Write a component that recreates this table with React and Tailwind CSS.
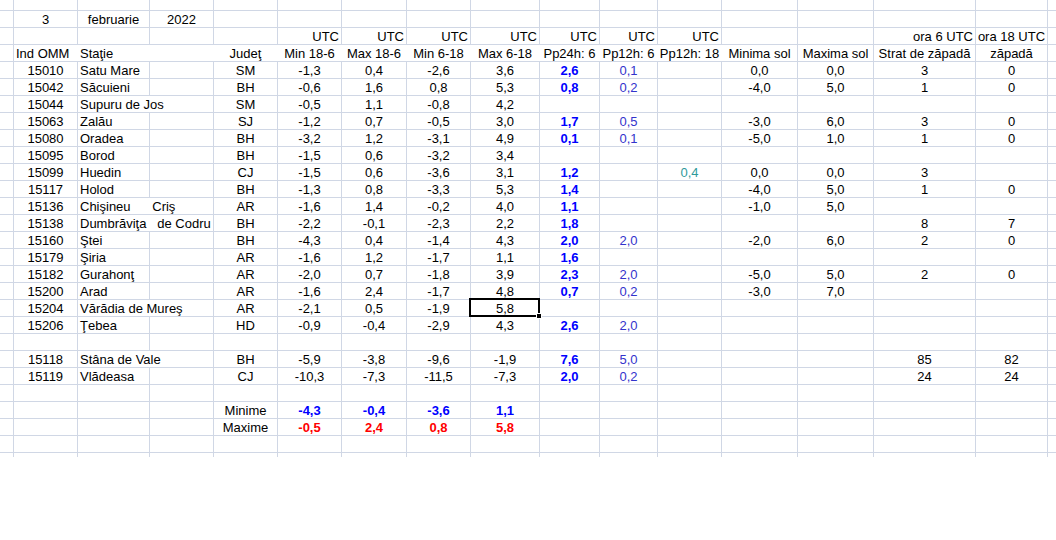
import React from 'react'

// column widths incl. right grid line
const WIDTHS = 'grid-cols-[14px_64px_72px_64px_64px_64px_65px_64px_69px_60px_58px_64px_76px_76px_102px_72px_1fr]'

const K = {
  b: 'font-bold text-[#0000ff]',
  p: 'text-[#3333cc]',
  t: 'text-[#2f9a9a]',
  r: 'font-bold text-[#ff0000]',
}

// data columns: 1 Ind, 2 Statie, 4 Judet, 5..8 temps, 9 Pp24, 10 Pp12/6, 11 Pp12/18, 12 min sol, 13 max sol, 14 strat, 15 zapada
const DATA = [
  ['15010', 'Satu Mare', 'SM', '-1,3', '0,4', '-2,6', '3,6', '2,6', '0,1', '', '0,0', '0,0', '3', '0'],
  ['15042', 'Săcuieni', 'BH', '-0,6', '1,6', '0,8', '5,3', '0,8', '0,2', '', '-4,0', '5,0', '1', '0'],
  ['15044', 'Supuru de Jos', 'SM', '-0,5', '1,1', '-0,8', '4,2', '', '', '', '', '', '', ''],
  ['15063', 'Zalău', 'SJ', '-1,2', '0,7', '-0,5', '3,0', '1,7', '0,5', '', '-3,0', '6,0', '3', '0'],
  ['15080', 'Oradea', 'BH', '-3,2', '1,2', '-3,1', '4,9', '0,1', '0,1', '', '-5,0', '1,0', '1', '0'],
  ['15095', 'Borod', 'BH', '-1,5', '0,6', '-3,2', '3,4', '', '', '', '', '', '', ''],
  ['15099', 'Huedin', 'CJ', '-1,5', '0,6', '-3,6', '3,1', '1,2', '', '0,4', '0,0', '0,0', '3', ''],
  ['15117', 'Holod', 'BH', '-1,3', '0,8', '-3,3', '5,3', '1,4', '', '', '-4,0', '5,0', '1', '0'],
  ['15136', 'Chişineu      Criş', 'AR', '-1,6', '1,4', '-0,2', '4,0', '1,1', '', '', '-1,0', '5,0', '', ''],
  ['15138', 'Dumbrăviţa   de Codru', 'BH', '-2,2', '-0,1', '-2,3', '2,2', '1,8', '', '', '', '', '8', '7'],
  ['15160', 'Ştei', 'BH', '-4,3', '0,4', '-1,4', '4,3', '2,0', '2,0', '', '-2,0', '6,0', '2', '0'],
  ['15179', 'Şiria', 'AR', '-1,6', '1,2', '-1,7', '1,1', '1,6', '', '', '', '', '', ''],
  ['15182', 'Gurahonţ', 'AR', '-2,0', '0,7', '-1,8', '3,9', '2,3', '2,0', '', '-5,0', '5,0', '2', '0'],
  ['15200', 'Arad', 'AR', '-1,6', '2,4', '-1,7', '4,8', '0,7', '0,2', '', '-3,0', '7,0', '', ''],
  ['15204', 'Vărădia de Mureş', 'AR', '-2,1', '0,5', '-1,9', '5,8', '', '', '', '', '', '', ''],
  ['15206', 'Ţebea', 'HD', '-0,9', '-0,4', '-2,9', '4,3', '2,6', '2,0', '', '', '', '', ''],
  null,
  ['15118', 'Stâna de Vale', 'BH', '-5,9', '-3,8', '-9,6', '-1,9', '7,6', '5,0', '', '', '', '85', '82'],
  ['15119', 'Vlădeasa', 'CJ', '-10,3', '-7,3', '-11,5', '-7,3', '2,0', '0,2', '', '', '', '24', '24'],
]

const DCOLS = [1, 2, 4, 5, 6, 7, 8, 9, 10, 11, 12, 13, 14, 15]
const OVERFLOW = ['15044', '15136', '15138', '15204', '15118']

function buildRows() {
  const rows = []
  rows.push({ h: 'h-[11px]', cells: {} })
  rows.push({ cells: { 1: { v: '3' }, 2: { v: 'februarie' }, 3: { v: '2022' } } })
  const utc = {}
  for (let c = 5; c <= 11; c++) utc[c] = { v: 'UTC', a: 'r' }
  utc[14] = { v: 'ora 6 UTC', a: 'r' }
  utc[15] = { v: 'ora 18 UTC' }
  rows.push({ cells: utc })
  const hdr = {
    1: { v: 'Ind OMM', a: 'l' },
    2: { v: 'Staţie', a: 'l' },
    4: { v: 'Judeţ' },
    5: { v: 'Min 18-6' },
    6: { v: 'Max 18-6' },
    7: { v: 'Min 6-18' },
    8: { v: 'Max 6-18' },
    9: { v: 'Pp24h: 6' },
    10: { v: 'Pp12h: 6' },
    11: { v: 'Pp12h: 18' },
    12: { v: 'Minima sol' },
    13: { v: 'Maxima sol' },
    14: { v: 'Strat de zăpadă' },
    15: { v: 'zăpadă' },
  }
  rows.push({ cells: hdr, hideR: [1, 2, 3, 4, 5, 6, 7, 8, 9, 10, 11] })
  DATA.forEach((d) => {
    if (!d) return rows.push({ cells: {} })
    const cells = {}
    d.forEach((v, i) => {
      const c = DCOLS[i]
      if (!v) return
      const cell = { v }
      if (c === 2) cell.a = 'l'
      if (c === 9) cell.k = 'b'
      if (c === 10) cell.k = 'p'
      if (c === 11) cell.k = 't'
      cells[c] = cell
    })
    rows.push({ cells, hideR: OVERFLOW.includes(d[0]) ? [2] : [], sel: d[0] === '15204' })
  })
  rows.push({ cells: {} })
  rows.push({ cells: { 4: { v: 'Minime' }, 5: { v: '-4,3', k: 'b' }, 6: { v: '-0,4', k: 'b' }, 7: { v: '-3,6', k: 'b' }, 8: { v: '1,1', k: 'b' } } })
  rows.push({ cells: { 4: { v: 'Maxime' }, 5: { v: '-0,5', k: 'r' }, 6: { v: '2,4', k: 'r' }, 7: { v: '0,8', k: 'r' }, 8: { v: '5,8', k: 'r' } } })
  rows.push({ cells: {} })
  return rows
}

function Cell({ cell, hideR, sel, h }) {
  const align = cell?.a === 'l' ? 'text-left pl-[2px]' : cell?.a === 'r' ? 'text-right pr-[2px]' : 'text-center'
  return (
    <div className={`relative border-b border-[#d0d7e5] ${hideR ? 'border-r-0 pr-px' : 'border-r'} ${h || 'h-[17px]'}`}>
      {cell && (
        <div className={`relative z-10 whitespace-pre leading-[16px] pt-px ${align} ${cell.k ? K[cell.k] : ''}`}>
          {cell.v}
        </div>
      )}
      {sel && (
        <div className="absolute -left-[2px] -top-[2px] -right-[1px] -bottom-[1px] border-2 border-black z-20">
          <div className="absolute -right-[4px] -bottom-[4px] w-[6px] h-[6px] bg-black border border-white" />
        </div>
      )}
    </div>
  )
}

export default function App() {
  const rows = buildRows()
  return (
    <div className="w-[1056px] h-[540px] overflow-hidden bg-white text-black text-[13px]" style={{ fontFamily: '"Liberation Sans", Arial, sans-serif' }}>
      <div className={`grid ${WIDTHS}`}>
        {rows.map((row, r) =>
          Array.from({ length: 17 }, (_, c) => (
            <Cell
              key={`${r}-${c}`}
              cell={row.cells[c]}
              h={row.h}
              hideR={c === 16 || (row.hideR || []).includes(c)}
              sel={row.sel && c === 8}
            />
          ))
        )}
        {Array.from({ length: 17 }, (_, c) => (
          <div key={`end-${c}`} className={`h-[4px] ${c === 16 ? '' : 'border-r border-[#d0d7e5]'}`} />
        ))}
      </div>
    </div>
  )
}
